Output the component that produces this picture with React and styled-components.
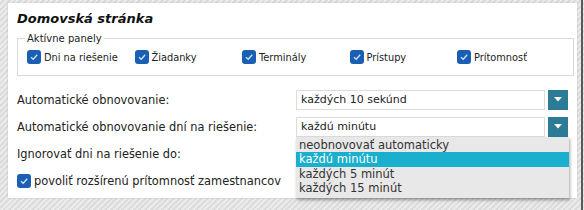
import React from "react";
import styled, { createGlobalStyle } from "styled-components";

const GlobalStyle = createGlobalStyle`
  html, body {
    margin: 0;
    padding: 0;
  }
  body {
    width: 584px;
    height: 210px;
    overflow: hidden;
    font-family: "DejaVu Sans", Verdana, sans-serif;
    font-size: 11px;
    color: #222;
    background: repeating-linear-gradient(
      135deg,
      #ebebeb 0 2px,
      #dcdcdc 2px 4px
    );
  }
`;

const Frame = styled.div`
  box-sizing: border-box;
  width: 584px;
  height: 210px;
  padding: 3px 0 0 8px;
  display: flex;
  gap: 4px;
`;

const Panel = styled.div`
  box-sizing: border-box;
  width: 569px;
  height: 195px;
  background: #fff;
  padding: 8px 8px 0 9px;
  box-shadow: 0 0 2px rgba(0, 0, 0, 0.15);
`;

const Edge = styled.div`
  width: 2px;
  height: 210px;
  margin-top: -3px;
  background: #5a5a5a;
`;

const Title = styled.h1`
  margin: 0 0 6px;
  font-size: 13px;
  font-weight: bold;
  font-style: italic;
  color: #111;
  line-height: 16px;
`;

const Fieldset = styled.fieldset`
  margin: 0;
  padding: 4px 8px 9px 9px;
  border: 1px solid #d9d9d9;
  width: 552px;
  box-sizing: border-box;
`;

const Legend = styled.legend`
  padding: 0 2px;
  margin-left: -2px;
  font-size: 10px;
  color: #222;
`;

const PanelGrid = styled.div`
  display: grid;
  grid-template-columns: repeat(5, 107.5px);
`;

const CheckLabel = styled.label`
  display: flex;
  align-items: center;
  gap: 3px;
  height: 18px;
  font-size: ${({ size }) => size || "11px"};
  white-space: nowrap;
`;

const Box = styled.span`
  box-sizing: border-box;
  width: 14px;
  height: 14px;
  border-radius: 3px;
  background: #1a5fb4;
  display: inline-flex;
  align-items: center;
  justify-content: center;
  flex: none;
`;

function Check({ size, children }) {
  return (
    <CheckLabel size={size}>
      <Box>
        <svg width="10" height="10" viewBox="0 0 10 10">
          <path d="M2 5.2 L4.2 7.3 L8.2 2.8" fill="none" stroke="#cfe3ff" strokeWidth="1.3" />
        </svg>
      </Box>
      {children}
    </CheckLabel>
  );
}

const Form = styled.div`
  display: flex;
  flex-direction: column;
  margin-top: 10px;
`;

const Row = styled.div`
  position: relative;
  display: grid;
  grid-template-columns: 279px 1fr;
  align-items: center;
  height: 27px;
`;

const Label = styled.span`
  font-size: 11.4px;
`;

const Select = styled.div`
  display: flex;
  align-items: center;
  gap: 3px;
  width: 272px;
  height: 20px;
`;

const SelectValue = styled.div`
  box-sizing: border-box;
  flex: 1;
  height: 20px;
  border: 1px solid #dcdcdc;
  padding: 0 4px;
  line-height: 18px;
  font-size: 11px;
`;

const Arrow = styled.div`
  width: 20px;
  height: 20px;
  background: #2b7b96;
  display: flex;
  align-items: center;
  justify-content: center;
`;

const Menu = styled.ul`
  position: absolute;
  left: 279px;
  top: 23.5px;
  width: 273px;
  margin: 0;
  padding: 1px 0 2px;
  list-style: none;
  background: #e8e8e8;
  box-shadow: 1px 2px 3px rgba(0, 0, 0, 0.35);
  z-index: 5;
`;

const Option = styled.li`
  height: 14.5px;
  line-height: 14px;
  padding: 0 3px;
  font-size: 11.5px;
  color: ${({ selected }) => (selected ? "#fff" : "#333")};
  background: ${({ selected }) => (selected ? "#19afcd" : "transparent")};
`;

function Dropdown({ value }) {
  return (
    <Select>
      <SelectValue>{value}</SelectValue>
      <Arrow>
        <svg width="8" height="5" viewBox="0 0 8 5">
          <path d="M0 0 H8 L4 4.5 Z" fill="#fff" />
        </svg>
      </Arrow>
    </Select>
  );
}

export default function App() {
  const panels = ["Dni na riešenie", "Žiadanky", "Terminály", "Prístupy", "Prítomnosť"];
  const options = ["neobnovovať automaticky", "každú minútu", "každých 5 minút", "každých 15 minút"];

  return (
    <>
      <GlobalStyle />
      <Frame>
        <Panel>
          <Title>Domovská stránka</Title>
          <Fieldset>
            <Legend>Aktívne panely</Legend>
            <PanelGrid>
              {panels.map((p) => (
                <Check key={p} size="9.8px">{p}</Check>
              ))}
            </PanelGrid>
          </Fieldset>
          <Form>
            <Row>
              <Label>Automatické obnovovanie:</Label>
              <Dropdown value="každých 10 sekúnd" />
            </Row>
            <Row>
              <Label>Automatické obnovovanie dní na riešenie:</Label>
              <Dropdown value="každú minútu" />
              <Menu>
                {options.map((o) => (
                  <Option key={o} selected={o === "každú minútu"}>
                    {o}
                  </Option>
                ))}
              </Menu>
            </Row>
            <Row>
              <Label>Ignorovať dni na riešenie do:</Label>
            </Row>
            <Row>
              <Check size="11.4px">povoliť rozšírenú prítomnosť zamestnancov</Check>
            </Row>
          </Form>
        </Panel>
        <Edge />
      </Frame>
    </>
  );
}
